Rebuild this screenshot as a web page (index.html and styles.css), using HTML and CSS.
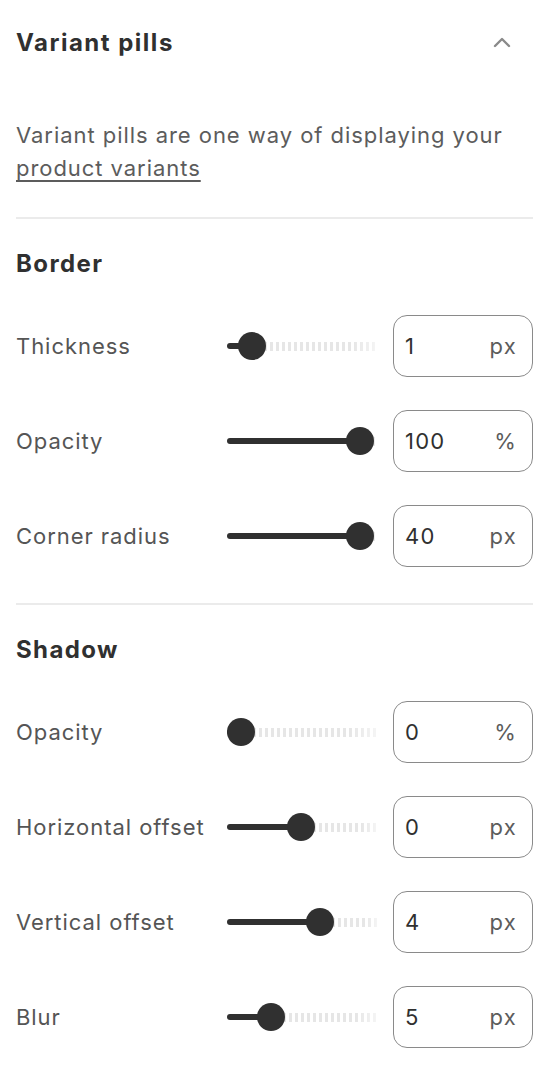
FILE: index.html
```html
<!DOCTYPE html>
<html>
<head>
<meta charset="utf-8">
<link rel="stylesheet" href="styles.css">
</head>
<body>
<div class="panel">
  <div class="header">
    <h2 class="title">Variant pills</h2>
    <svg class="chevron" width="20" height="12" viewBox="0 0 20 12"><path d="M3 10 L10 3 L17 10" fill="none" stroke="#8a8a8a" stroke-width="2.4" stroke-linecap="round" stroke-linejoin="round"/></svg>
  </div>
  <p class="desc">Variant pills are one way of displaying your <a href="#">product variants</a></p>
  <hr class="divider">
  <h3 class="section">Border</h3>
  <div class="rows">
    <div class="row">
      <span class="label">Thickness</span>
      <div class="slider" style="--p:0.095"><div class="fill"></div><div class="rest"></div><div class="thumb"></div></div>
      <div class="field"><span class="val">1</span><span class="unit">px</span></div>
    </div>
    <div class="row">
      <span class="label">Opacity</span>
      <div class="slider" style="--p:1"><div class="fill"></div><div class="rest"></div><div class="thumb"></div></div>
      <div class="field"><span class="val">100</span><span class="unit">%</span></div>
    </div>
    <div class="row">
      <span class="label">Corner radius</span>
      <div class="slider" style="--p:1"><div class="fill"></div><div class="rest"></div><div class="thumb"></div></div>
      <div class="field"><span class="val">40</span><span class="unit">px</span></div>
    </div>
  </div>
  <hr class="divider">
  <h3 class="section">Shadow</h3>
  <div class="rows">
    <div class="row">
      <span class="label">Opacity</span>
      <div class="slider" style="--p:0"><div class="fill"></div><div class="rest"></div><div class="thumb"></div></div>
      <div class="field"><span class="val">0</span><span class="unit">%</span></div>
    </div>
    <div class="row">
      <span class="label">Horizontal offset</span>
      <div class="slider" style="--p:0.5"><div class="fill"></div><div class="rest"></div><div class="thumb"></div></div>
      <div class="field"><span class="val">0</span><span class="unit">px</span></div>
    </div>
    <div class="row">
      <span class="label">Vertical offset</span>
      <div class="slider" style="--p:0.667"><div class="fill"></div><div class="rest"></div><div class="thumb"></div></div>
      <div class="field"><span class="val">4</span><span class="unit">px</span></div>
    </div>
    <div class="row">
      <span class="label">Blur</span>
      <div class="slider" style="--p:0.25"><div class="fill"></div><div class="rest"></div><div class="thumb"></div></div>
      <div class="field"><span class="val">5</span><span class="unit">px</span></div>
    </div>
  </div>
</div>
</body>
</html>
```
FILE: styles.css
```css
html, body {
  margin: 0;
  padding: 0;
  background: #ffffff;
}
body {
  font-family: Inter, "Noto Sans", "Liberation Sans", sans-serif;
  color: #303030;
}
.panel {
  padding: 0 27px 0 16px;
}
.header {
  height: 84px;
  display: flex;
  align-items: center;
  justify-content: space-between;
}
.title {
  margin: 0;
  font-size: 24px;
  font-weight: 700;
  letter-spacing: 1.5px;
  color: #303030;
}
.chevron {
  margin-right: 21px;
}
.desc {
  margin: 35px 0 0;
  font-size: 22px;
  letter-spacing: 0.95px;
  line-height: 33px;
  color: #5c5c5c;
}
.desc a {
  color: #5c5c5c;
  text-decoration: underline;
  text-underline-offset: 4px;
}
.divider {
  margin: 32px 0 0;
  border: 0;
  height: 2px;
  background: #ebebeb;
}
.section {
  margin: 30px 0 0;
  font-size: 24px;
  letter-spacing: 1.4px;
  line-height: 30px;
  font-weight: 700;
  color: #303030;
}
.rows {
  margin-top: 36px;
  display: flex;
  flex-direction: column;
  gap: 33.1px;
  margin-bottom: 36px;
}
.row {
  display: grid;
  grid-template-columns: 1fr 150px 140px;
  column-gap: 16px;
  align-items: center;
  height: 62px;
}
.label {
  font-size: 22px;
  letter-spacing: 0.95px;
  color: #555555;
  white-space: nowrap;
}
.slider {
  position: relative;
  height: 30px;
  display: flex;
  align-items: center;
}
.fill {
  width: calc(14px + 119px * var(--p));
  height: 6px;
  border-radius: 3px;
  background: #303030;
  flex: none;
}
.rest {
  flex: 1;
  height: 9px;
  background: repeating-linear-gradient(90deg, #e6e6e6 0 3px, transparent 3px 6px);
  -webkit-mask-image: linear-gradient(90deg, #000 80%, rgba(0,0,0,0.4));
  mask-image: linear-gradient(90deg, #000 80%, rgba(0,0,0,0.4));
}
.thumb {
  position: absolute;
  top: 1px;
  left: calc(119px * var(--p));
  width: 28px;
  height: 28px;
  border-radius: 50%;
  background: #303030;
}
.field {
  height: 62px;
  box-sizing: border-box;
  border: 1.5px solid #8a8a8a;
  border-radius: 14px;
  display: flex;
  align-items: center;
  justify-content: space-between;
  padding: 0 15px 0 11px;
  font-size: 22px;
  letter-spacing: 1.2px;
}
.val {
  color: #303030;
}
.unit {
  color: #5c5c5c;
}
```
